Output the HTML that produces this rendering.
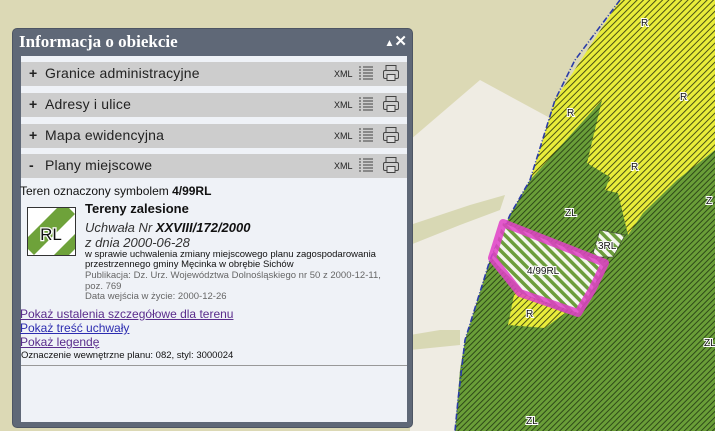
<!DOCTYPE html>
<html><head><meta charset="utf-8"><style>
*{margin:0;padding:0;box-sizing:border-box}
body{width:715px;height:431px;overflow:hidden;position:relative;font-family:"Liberation Sans",Arial,sans-serif;background:#dcd9b5}
#map{position:absolute;left:0;top:0}
.panel{position:absolute;left:12px;top:28px;width:401px;height:400px;background:#5f6877;border-radius:5px;border:1px solid #4d5563}
.title{position:absolute;left:6px;top:3px;color:#fff;font-family:"Liberation Serif",serif;font-weight:bold;font-size:17px}
.ctl{position:absolute;right:5px;top:3px;color:#fff;font-size:15px;font-weight:bold}
.inner{position:absolute;left:8px;top:27px;width:386px;height:366px;background:#eff2f7}
.bar{position:absolute;left:0;width:386px;height:24px;background:#cdcdcd}
.bar .t{position:absolute;left:8px;top:3px;font-size:14px;color:#222;letter-spacing:0.2px}
.bar .t b{font-weight:bold;display:inline-block;width:16px}
.bar .x{position:absolute;left:313px;top:7px;font-size:9px;color:#222}
.c{position:absolute;font-size:11px;color:#111}
a{color:#5a2c8c}
</style></head><body>
<svg id="map" width="715" height="431" viewBox="0 0 715 431">
<defs>
<pattern id="hy" width="4.5" height="4.5" patternUnits="userSpaceOnUse" patternTransform="rotate(45)"><rect width="5" height="5" fill="#e8ec3a"/><rect width="1" height="5" fill="#4a5214"/></pattern>
<pattern id="hg" width="4" height="4" patternUnits="userSpaceOnUse" patternTransform="rotate(45)"><rect width="5" height="5" fill="#6a9e38"/><rect width="1" height="5" fill="#2e4a18"/></pattern>
<pattern id="hw" width="7" height="7" patternUnits="userSpaceOnUse" patternTransform="rotate(-45)"><rect width="7" height="7" fill="#f4f7ee"/><rect width="3.5" height="7" fill="#6c9d3c"/></pattern>
</defs>
<rect width="715" height="431" fill="#dcd9b5"/>
<polygon points="410,140 480,80 550,118 530,180 510,215 490,260 465,340 455,431 410,431" fill="#efece3"/>
<polygon points="410,225 470,205 505,195 500,210 460,225 410,245" fill="#d8d8b4"/>
<polygon points="410,335 440,330 460,330 460,345 410,350" fill="#d8d8b4"/>
<polygon points="620,0 715,0 715,431 455,431 465,340 490,260 510,215 530,180 555,100" fill="url(#hy)"/>
<polygon points="602,100 587,163 610,177 605,190 618,193 628,235 643,213 677,180 715,150 715,431 455,431 460,370 465,340 490,260 510,215 530,180" fill="url(#hg)"/>
<polygon points="508,325 515,290 565,313 545,328" fill="url(#hy)"/>
<polyline points="620,0 575,60 555,100 530,180 510,215 490,260 465,340 458,400 455,431" fill="none" stroke="#2a3ca8" stroke-width="1.6" stroke-dasharray="6,2,1,2"/>
<polygon points="600,230 625,235 613,257 592,257" fill="url(#hw)" stroke="#333" stroke-width="0.5"/>
<polygon points="503,223 605,263 592,290 578,313 520,293 492,258" fill="url(#hw)" stroke="#e040c8" stroke-opacity="0.85" stroke-width="8" stroke-linejoin="round"/>
<g font-family="Liberation Sans" font-size="10" fill="#111" stroke="#fff" stroke-width="2" paint-order="stroke">
<text x="641" y="26">R</text><text x="680" y="100">R</text><text x="567" y="116">R</text><text x="631" y="170">R</text>
<text x="565" y="216">ZL</text><text x="598" y="249">3RL</text><text x="527" y="274">4/99RL</text><text x="526" y="317">R</text>
<text x="706" y="204">Z</text><text x="704" y="346">ZL</text><text x="526" y="424">ZL</text></g>
</svg>
<div class="panel">
<div class="title">Informacja o obiekcie</div>
<div class="ctl"><span style="font-size:10px">▲</span>✕</div>
<div class="inner">
<div class="bar" style="top:6px"><div class="t"><b>+</b>Granice administracyjne</div><div class="x">XML</div></div>
<div class="bar" style="top:37px"><div class="t"><b>+</b>Adresy i ulice</div><div class="x">XML</div></div>
<div class="bar" style="top:68px"><div class="t"><b>+</b>Mapa ewidencyjna</div><div class="x">XML</div></div>
<div class="bar" style="top:98px"><div class="t"><b>-</b>Plany miejscowe</div><div class="x">XML</div></div>
<svg style="position:absolute;left:0;top:0" width="386" height="130">
<g id="icons" stroke="#444" fill="none" stroke-width="1">
<g transform="translate(338,10)"><path d="M0,1h2M0,4h2M0,7h2M0,10h2M0,13h2M4,1h10M4,4h10M4,7h10M4,10h10M4,13h10"/></g>
<g transform="translate(362,9)"><rect x="3" y="0.5" width="10" height="5"/><rect x="0.5" y="5.5" width="15" height="8" rx="1.5"/><rect x="4" y="9.5" width="8" height="6" fill="#ddd"/></g>
</g>
<use href="#icons" y="31"/><use href="#icons" y="62"/><use href="#icons" y="92"/>
</svg>
<div class="c" style="left:-1px;top:128px;font-size:12px">Teren oznaczony symbolem <b>4/99RL</b></div>
<svg style="position:absolute;left:6px;top:151px" width="50" height="50"><defs><clipPath id="cl"><rect x="1" y="1" width="47" height="47"/></clipPath></defs><rect x="0.5" y="0.5" width="48" height="48" fill="#fff" stroke="#333"/><g clip-path="url(#cl)"><path d="M-5,36 L36,-5 L48,7 L7,48Z M20,55 L55,20 L60,30 L30,60Z" fill="#6ea23a"/></g><text x="24" y="33" font-family="Liberation Sans" font-size="17" text-anchor="middle" fill="#111" stroke="#fff" stroke-width="2.5" paint-order="stroke">RL</text></svg>
<div class="c" style="left:64px;top:145px;font-size:13px;font-weight:bold">Tereny zalesione</div>
<div class="c" style="left:64px;top:164px;font-size:13px;font-style:italic;color:#333">Uchwała Nr <b style="color:#111">XXVIII/172/2000</b></div>
<div class="c" style="left:64px;top:179px;font-size:13px;font-style:italic;color:#333">z dnia 2000-06-28</div>
<div class="c" style="left:64px;top:194px;font-size:9.5px;line-height:10px">w sprawie uchwalenia zmiany miejscowego planu zagospodarowania<br>przestrzennego gminy Męcinka w obrębie Sichów</div>
<div class="c" style="left:64px;top:215px;font-size:9.5px;line-height:10.5px;color:#666">Publikacja: Dz. Urz. Województwa Dolnośląskiego nr 50 z 2000-12-11,<br>poz. 769<br>Data wejścia w życie: 2000-12-26</div>
<div class="c" style="left:-1px;top:251px;font-size:12px;line-height:14px"><a href="#">Pokaż ustalenia szczegółowe dla terenu</a><br><a href="#" style="color:#2c2cb0">Pokaż treść uchwały</a><br><a href="#">Pokaż legendę</a></div>
<div class="c" style="left:0;top:294px;font-size:9.5px">Oznaczenie wewnętrzne planu: 082, styl: 3000024</div>
<div style="position:absolute;left:0;top:309px;width:386px;height:1px;background:#999"></div>
</div></div>
</body></html>
